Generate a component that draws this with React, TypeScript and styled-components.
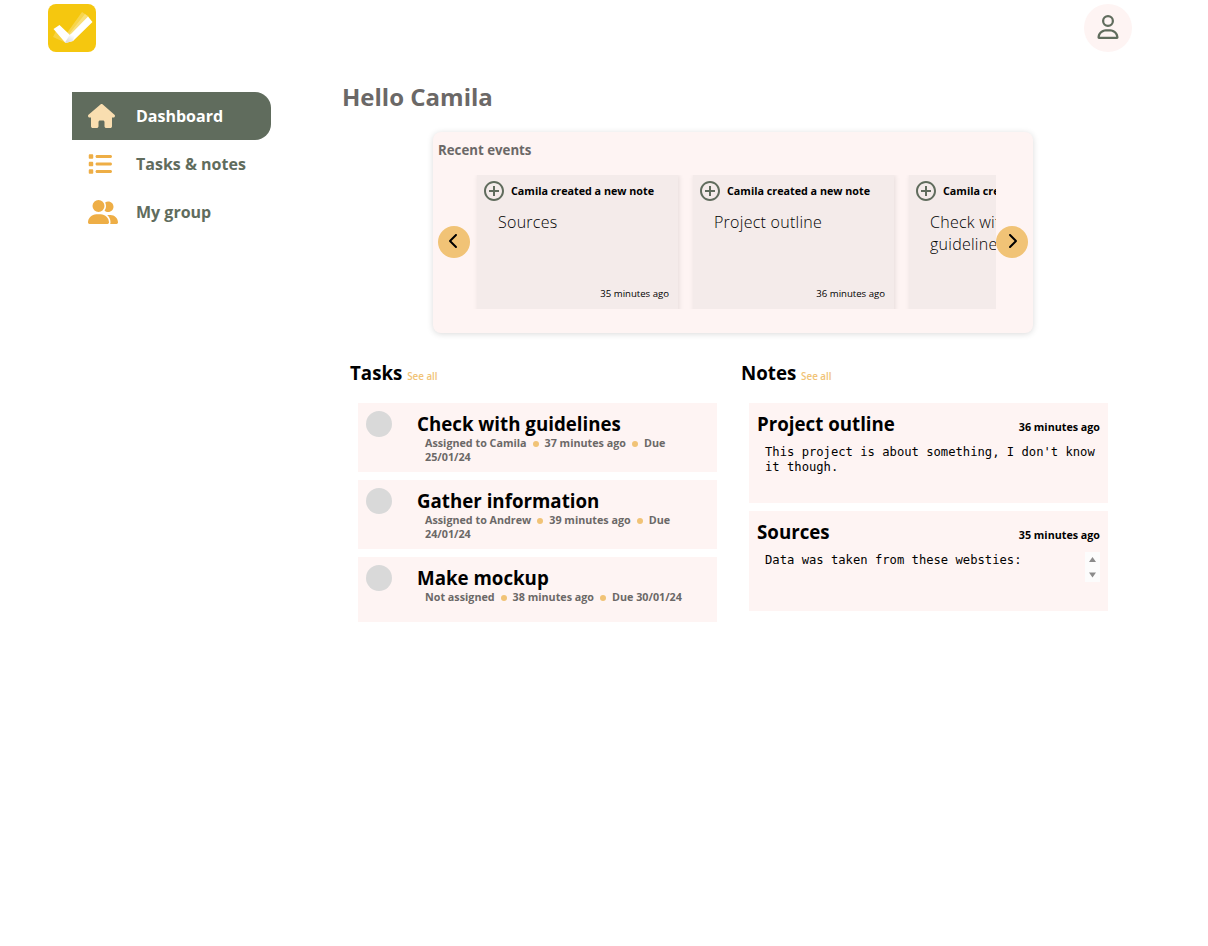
import React from "react";
import styled, { createGlobalStyle } from "styled-components";
import { FaHouse, FaList, FaUserGroup, FaRegUser, FaChevronLeft, FaChevronRight } from "react-icons/fa6";
import { MdAddCircleOutline } from "react-icons/md";

const GlobalStyle = createGlobalStyle`
  * { box-sizing: border-box; }
  body { margin: 0; background: #fff; color: #000; font-family: "Open Sans", sans-serif; }
  h1, h2, h3, p { margin: 0; }
  button { border: 0; padding: 0; font: inherit; }
`;

const Page = styled.div`
  width: 1208px;
  height: 946px;
  overflow: hidden;
`;

const Header = styled.header`
  display: flex;
  justify-content: space-between;
  height: 56px;
  padding: 4px 76px 4px 48px;
`;

const Avatar = styled.button`
  display: flex;
  align-items: center;
  justify-content: center;
  width: 48px;
  height: 48px;
  padding-bottom: 2px;
  border-radius: 50%;
  background: #fef4f3;
  color: #606c5d;
  font-size: 24px;
`;

const Body = styled.div`
  display: flex;
`;

const Sidebar = styled.nav`
  width: 271px;
  padding: 36px 0 0 72px;
`;

const NavItem = styled.a<{ $active?: boolean }>`
  display: flex;
  align-items: center;
  height: 48px;
  padding-left: 16px;
  border-radius: 0 16px 16px 0;
  background: ${(p) => (p.$active ? "#606c5d" : "transparent")};
  color: ${(p) => (p.$active ? "#fff" : "#606c5d")};
  font-size: 16px;
  font-weight: 700;
`;

const NavIcon = styled.span<{ $active?: boolean; $width: number }>`
  display: flex;
  width: 48px;
  color: ${(p) => (p.$active ? "#f9deb0" : "#eeae46")};
  svg { width: ${(p) => p.$width}px; height: 24px; }
`;

const Main = styled.main`
  width: 782px;
  margin-left: 71px;
  padding-top: 24px;
`;

const Greeting = styled.h1`
  height: 52px;
  font-size: 24px;
  line-height: 34px;
  font-weight: 700;
  color: #6b6867;
`;

const Events = styled.section`
  width: 600px;
  height: 201px;
  margin-left: 91px;
  padding: 9px 5px 0;
  border-radius: 8px;
  background: #fef4f3;
  box-shadow: 0 1px 6px rgba(0, 0, 0, 0.15);
`;

const EventsTitle = styled.h3`
  height: 34px;
  font-size: 13.28px;
  line-height: 18px;
  font-weight: 700;
  color: #6b6867;
`;

const Carousel = styled.div`
  display: flex;
  align-items: center;
`;

const ArrowButton = styled.button`
  display: flex;
  flex: none;
  align-items: center;
  justify-content: center;
  width: 32px;
  height: 32px;
  border-radius: 50%;
  background: #f1c376;
  color: #000;
  font-size: 16px;
  padding-bottom: 2px;
`;

const Track = styled.div`
  display: flex;
  width: 526px;
  height: 134px;
  overflow: hidden;
`;

const EventCard = styled.article`
  display: flex;
  flex: none;
  flex-direction: column;
  width: 201px;
  height: 150px;
  margin: 0 8px 0 7px;
  padding: 4px 9px 0 5px;
  background: #f4ebea;
  box-shadow: 1px 0 5px rgba(0, 0, 0, 0.1);
`;

const EventHead = styled.div`
  display: flex;
  align-items: center;
  height: 24px;
  font-size: 10.75px;
  line-height: 24px;
  font-weight: 700;
  white-space: nowrap;
  svg { flex: none; width: 24px; height: 24px; margin-right: 5px; color: #606c5d; }
`;

const EventText = styled.p`
  width: 170px;
  height: 79px;
  padding: 8px 0 0 16px;
  font-size: 16px;
  line-height: 22px;
  font-weight: 300;
  letter-spacing: 0.26px;
`;

const EventTime = styled.span`
  align-self: flex-end;
  font-size: 9.6px;
  line-height: 23px;
`;

const Columns = styled.div`
  display: flex;
  padding-left: 8px;
  margin-top: 26px;
`;

const Column = styled.section<{ $width: number }>`
  width: ${(p) => p.$width}px;
`;

const ColumnTitle = styled.h2`
  height: 44px;
  font-size: 18.72px;
  line-height: 28px;
  font-weight: 700;
`;

const SeeAll = styled.a`
  font-size: 9.8px;
  font-weight: 600;
  color: #f1c376;
`;

const List = styled.div`
  display: flex;
  flex-direction: column;
  gap: 8px;
  width: 359px;
  margin-left: 8px;
`;

const TaskCard = styled.article`
  display: flex;
  min-height: 65px;
  padding: 8px;
  background: #fef4f3;
`;

const Check = styled.span`
  flex: none;
  width: 26px;
  height: 26px;
  margin-right: 25px;
  border-radius: 50%;
  background: #d9d9d9;
`;

const CardTitle = styled.h3`
  font-size: 18.72px;
  line-height: 26px;
  font-weight: 700;
`;

const Meta = styled.p`
  width: 266px;
  padding-left: 8px;
  margin-top: -1px;
  font-size: 10.75px;
  line-height: 14px;
  font-weight: 700;
  color: #6b6867;
`;

const Dot = styled.i`
  display: inline-block;
  width: 6px;
  height: 6px;
  margin: 0 3.2px;
  border-radius: 50%;
  background: #f1c376;
`;

const NoteCard = styled.article`
  height: 100px;
  padding: 8px;
  background: #fef4f3;
`;

const NoteHead = styled.div`
  display: flex;
  align-items: baseline;
  justify-content: space-between;
  height: 33px;
`;

const NoteTime = styled.span`
  font-size: 10.72px;
  font-weight: 700;
`;

const NoteBody = styled.div`
  display: flex;
  justify-content: space-between;
  height: 30px;
  padding-left: 8px;
  font-family: "DejaVu Sans Mono", monospace;
  font-size: 12.18px;
  line-height: 15px;
`;

const NoteText = styled.p`
  padding-top: 1px;
`;

const Scrollbar = styled.div`
  display: flex;
  flex-direction: column;
  width: 15px;
  height: 30px;
  background: #fcfcfc;
`;

const Logo = () => (
  <svg width="48" height="48" viewBox="0 0 48 48">
    <defs>
      <linearGradient id="fold" x1="0" y1="1" x2="0.6" y2="0">
        <stop offset="0" stopColor="#d4d4d4" />
        <stop offset="1" stopColor="#fff" />
      </linearGradient>
    </defs>
    <rect width="48" height="48" rx="8" fill="#f5c70f" />
    <path d="M19 29 34 8l6 4-16 20z" fill="#fff" opacity=".25" />
    <path d="M21 30 37 10l4 3-18 19z" fill="#fff" opacity=".25" />
    <path d="M8 27 5 33l13 6 5-3z" fill="#fff" opacity=".2" />
    <path d="M5.500 25 11.500 21 22 31 40 12.500 44.500 18 25 37 17.500 39z" fill="#fff" />
    <path d="M17 38.500 22 30.500 27 30 25 37 17.500 39z" fill="url(#fold)" />
  </svg>
);

const events = [
  { text: "Sources", time: "35 minutes ago" },
  { text: "Project outline", time: "36 minutes ago" },
  { text: "Check with guidelines", time: "37 minutes ago" },
];

const tasks = [
  { title: "Check with guidelines", who: "Assigned to Camila", time: "37 minutes ago", due: "Due 25/01/24" },
  { title: "Gather information", who: "Assigned to Andrew", time: "39 minutes ago", due: "Due 24/01/24" },
  { title: "Make mockup", who: "Not assigned", time: "38 minutes ago", due: "Due 30/01/24" },
];

const notes = [
  { title: "Project outline", time: "36 minutes ago", body: "This project is about something, I don't know it though.", scroll: false },
  { title: "Sources", time: "35 minutes ago", body: "Data was taken from these websties:", scroll: true },
];

export default function App() {
  return (
    <Page>
      <GlobalStyle />
      <Header>
        <Logo />
        <Avatar aria-label="Profile"><FaRegUser /></Avatar>
      </Header>
      <Body>
        <Sidebar>
          <NavItem $active><NavIcon $active $width={27}><FaHouse /></NavIcon>Dashboard</NavItem>
          <NavItem><NavIcon $width={24}><FaList /></NavIcon>Tasks &amp; notes</NavItem>
          <NavItem><NavIcon $width={30}><FaUserGroup /></NavIcon>My group</NavItem>
        </Sidebar>
        <Main>
          <Greeting>Hello Camila</Greeting>
          <Events>
            <EventsTitle>Recent events</EventsTitle>
            <Carousel>
              <ArrowButton aria-label="Previous"><FaChevronLeft /></ArrowButton>
              <Track>
                {events.map((e) => (
                  <EventCard key={e.text}>
                    <EventHead><MdAddCircleOutline />Camila created a new note</EventHead>
                    <EventText>{e.text}</EventText>
                    <EventTime>{e.time}</EventTime>
                  </EventCard>
                ))}
              </Track>
              <ArrowButton aria-label="Next"><FaChevronRight /></ArrowButton>
            </Carousel>
          </Events>
          <Columns>
            <Column $width={391}>
              <ColumnTitle>Tasks <SeeAll>See all</SeeAll></ColumnTitle>
              <List>
                {tasks.map((t) => (
                  <TaskCard key={t.title}>
                    <Check />
                    <div>
                      <CardTitle>{t.title}</CardTitle>
                      <Meta>{t.who} <Dot /> {t.time} <Dot /> {t.due}</Meta>
                    </div>
                  </TaskCard>
                ))}
              </List>
            </Column>
            <Column $width={367}>
              <ColumnTitle>Notes <SeeAll>See all</SeeAll></ColumnTitle>
              <List>
                {notes.map((n) => (
                  <NoteCard key={n.title}>
                    <NoteHead><CardTitle>{n.title}</CardTitle><NoteTime>{n.time}</NoteTime></NoteHead>
                    <NoteBody>
                      <NoteText>{n.body}</NoteText>
                      {n.scroll && (
                        <Scrollbar>
                          <svg width="15" height="30" viewBox="0 0 15 30" fill="#8b8b8b">
                            <path d="M4 10 7.500 5 11 10zM4 20.500 7.500 25.500 11 20.500z" />
                          </svg>
                        </Scrollbar>
                      )}
                    </NoteBody>
                  </NoteCard>
                ))}
              </List>
            </Column>
          </Columns>
        </Main>
      </Body>
    </Page>
  );
}
